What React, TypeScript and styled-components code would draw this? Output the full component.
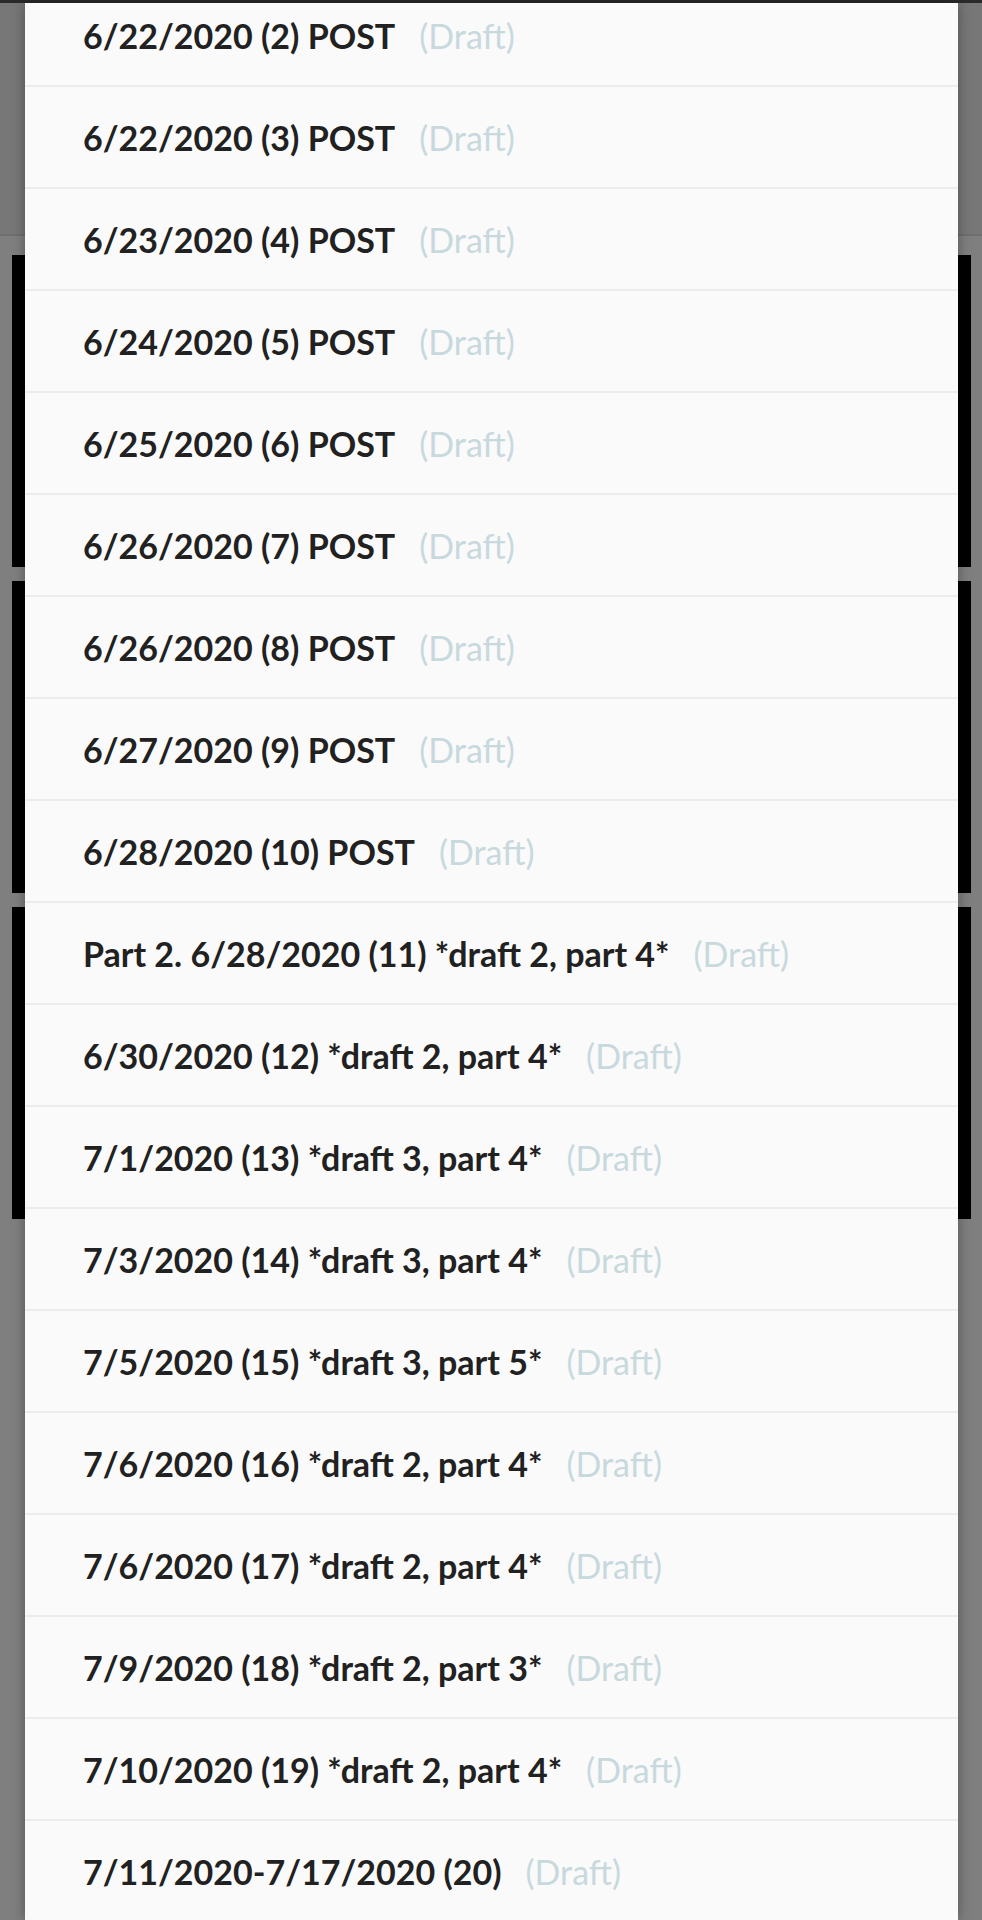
import React from 'react';
import styled, { createGlobalStyle } from 'styled-components';

const posts = [
	'6/22/2020 (2) POST',
	'6/22/2020 (3) POST',
	'6/23/2020 (4) POST',
	'6/24/2020 (5) POST',
	'6/25/2020 (6) POST',
	'6/26/2020 (7) POST',
	'6/26/2020 (8) POST',
	'6/27/2020 (9) POST',
	'6/28/2020 (10) POST',
	'Part 2. 6/28/2020 (11) *draft 2, part 4*',
	'6/30/2020 (12) *draft 2, part 4*',
	'7/1/2020 (13) *draft 3, part 4*',
	'7/3/2020 (14) *draft 3, part 4*',
	'7/5/2020 (15) *draft 3, part 5*',
	'7/6/2020 (16) *draft 2, part 4*',
	'7/6/2020 (17) *draft 2, part 4*',
	'7/9/2020 (18) *draft 2, part 3*',
	'7/10/2020 (19) *draft 2, part 4*',
	'7/11/2020-7/17/2020 (20)',
];

function App() {
	return (
		<Screen>
			<GlobalStyle />
			<StatusStrip />
			<Backdrop>
				<Header />
				<Cards>
					<Card />
					<Card />
					<Card />
				</Cards>
			</Backdrop>
			<Sheet>
				<List>
					{posts.map((title) => (
						<Row key={title}>
							<Title>{title}</Title>
							<Status>(Draft)</Status>
						</Row>
					))}
				</List>
			</Sheet>
		</Screen>
	);
}

const GlobalStyle = createGlobalStyle`
	html, body {
		margin: 0;
		padding: 0;
		background: #7f7f7f;
	}
	* {
		box-sizing: border-box;
	}
`;

const Screen = styled('div')`
	position: relative;
	width: 982px;
	height: 1920px;
	overflow: hidden;
	background: #7f7f7f;
	font-family: 'Lato', 'Noto Sans', sans-serif;
`;

const StatusStrip = styled('div')`
	height: 3px;
	background: #2a2a2a;
`;

const Backdrop = styled('div')`
	display: flex;
	flex-direction: column;
`;

const Header = styled('div')`
	height: 233px;
	background: #777777;
	border-bottom: 2px solid #6e6e6e;
`;

const Cards = styled('div')`
	display: flex;
	flex-direction: column;
	gap: 14px;
	padding: 19px 11px 0 12px;
`;

const Card = styled('div')`
	height: 312px;
	background: #000;
`;

const Sheet = styled('div')`
	position: absolute;
	top: 3px;
	left: 25px;
	width: 933px;
	bottom: 0;
	background: #fafafa;
	box-shadow: 0 0 12px rgba(0, 0, 0, 0.35);
	overflow: hidden;
`;

const List = styled('div')`
	display: flex;
	flex-direction: column;
	margin-top: -18px;
`;

const Row = styled('div')`
	display: flex;
	align-items: center;
	gap: 24px;
	height: 102px;
	padding: 0 0 0 58px;
	border-bottom: 2px solid #ececec;
`;

const Title = styled('span')`
	font-size: 34px;
	font-weight: 700;
	color: #212121;
`;

const Status = styled('span')`
	font-size: 34px;
	font-weight: 400;
	color: #c8d9de;
`;

export default App;
